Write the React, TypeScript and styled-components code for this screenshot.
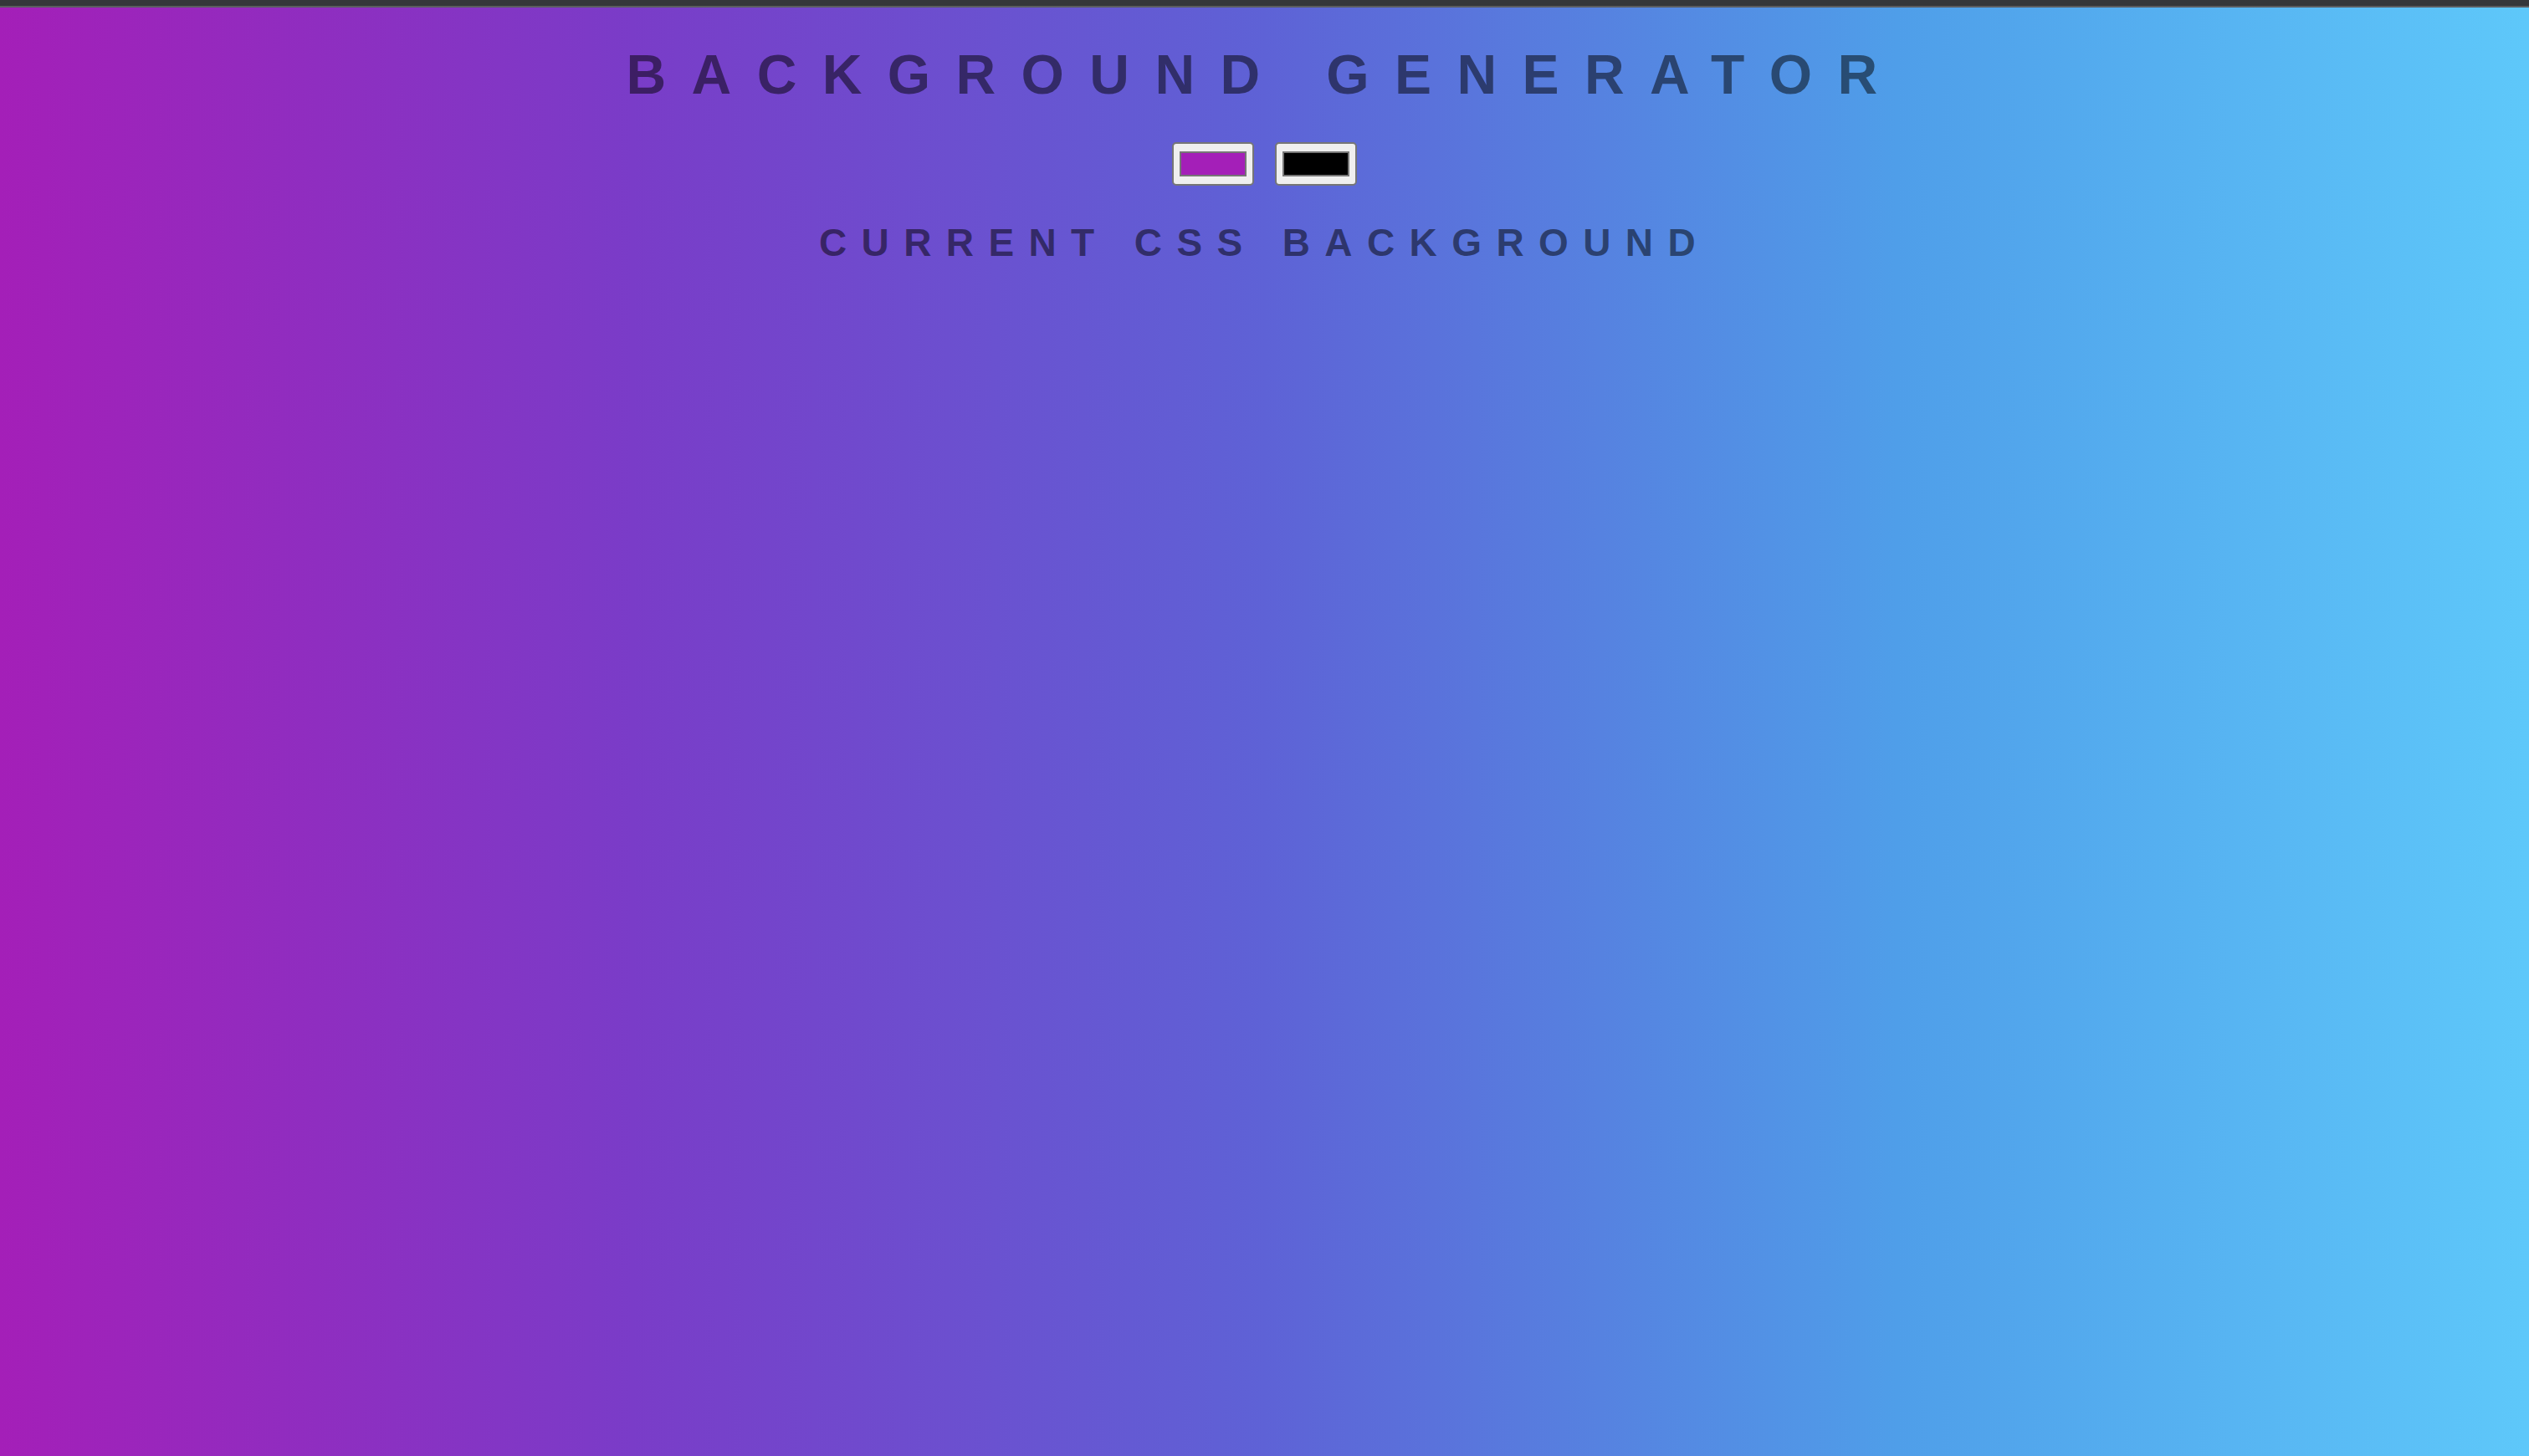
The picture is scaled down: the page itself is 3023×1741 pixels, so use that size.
import React, { useState } from 'react';
import styled, { createGlobalStyle } from 'styled-components';

const GlobalStyle = createGlobalStyle`
  html, body {
    margin: 0;
    padding: 0;
    height: 100%;
  }

  body {
    font-family: "Liberation Sans", Arial, sans-serif;
  }

  #root {
    min-height: 100%;
  }
`;

const Page = styled.div`
  display: flex;
  flex-direction: column;
  min-height: 100vh;
`;

const TopBar = styled.div`
  height: 7px;
  background: #35373a;
  border-bottom: 2px solid #5b5d60;
  flex-shrink: 0;
`;

const Main = styled.main`
  flex: 1;
  display: flex;
  flex-direction: column;
  align-items: center;
  padding-top: 47px;
  text-align: center;
  text-transform: uppercase;
  color: rgba(0, 0, 0, 0.5);
  background: linear-gradient(
    to right,
    #a41fb8 0%,
    #7a3cc8 25%,
    #5e62d6 50%,
    #4f9ee9 75%,
    #5ec8fa 100%
  );
`;

const Title = styled.h1`
  margin: 0;
  font-size: 66px;
  font-weight: 700;
  line-height: 1;
  letter-spacing: 30.4px;
`;

const Pickers = styled.div`
  display: flex;
  gap: 25px;
  margin-top: 48px;
`;

const ColorInput = styled.input`
  box-sizing: border-box;
  width: 98px;
  height: 52px;
  margin: 0;
  padding: 9px 7px;
  border: 2px solid #767676;
  border-radius: 5px;
  background: #efefef;
  cursor: pointer;

  &::-webkit-color-swatch-wrapper {
    padding: 0;
  }

  &::-webkit-color-swatch {
    border: 2px solid #767676;
    border-radius: 0;
  }
`;

const Subtitle = styled.h3`
  margin: 45px 0 0;
  font-size: 46px;
  font-weight: 700;
  line-height: 1;
  letter-spacing: 17.4px;
`;

export default function App() {
  const [color1, setColor1] = useState('#a41fb8');
  const [color2, setColor2] = useState('#000000');

  return (
    <>
      <GlobalStyle />
      <Page>
        <TopBar />
        <Main>
          <Title>Background Generator</Title>
          <Pickers>
            <ColorInput type="color" value={color1} onChange={e => setColor1(e.target.value)} />
            <ColorInput type="color" value={color2} onChange={e => setColor2(e.target.value)} />
          </Pickers>
          <Subtitle>Current CSS Background</Subtitle>
        </Main>
      </Page>
    </>
  );
}
